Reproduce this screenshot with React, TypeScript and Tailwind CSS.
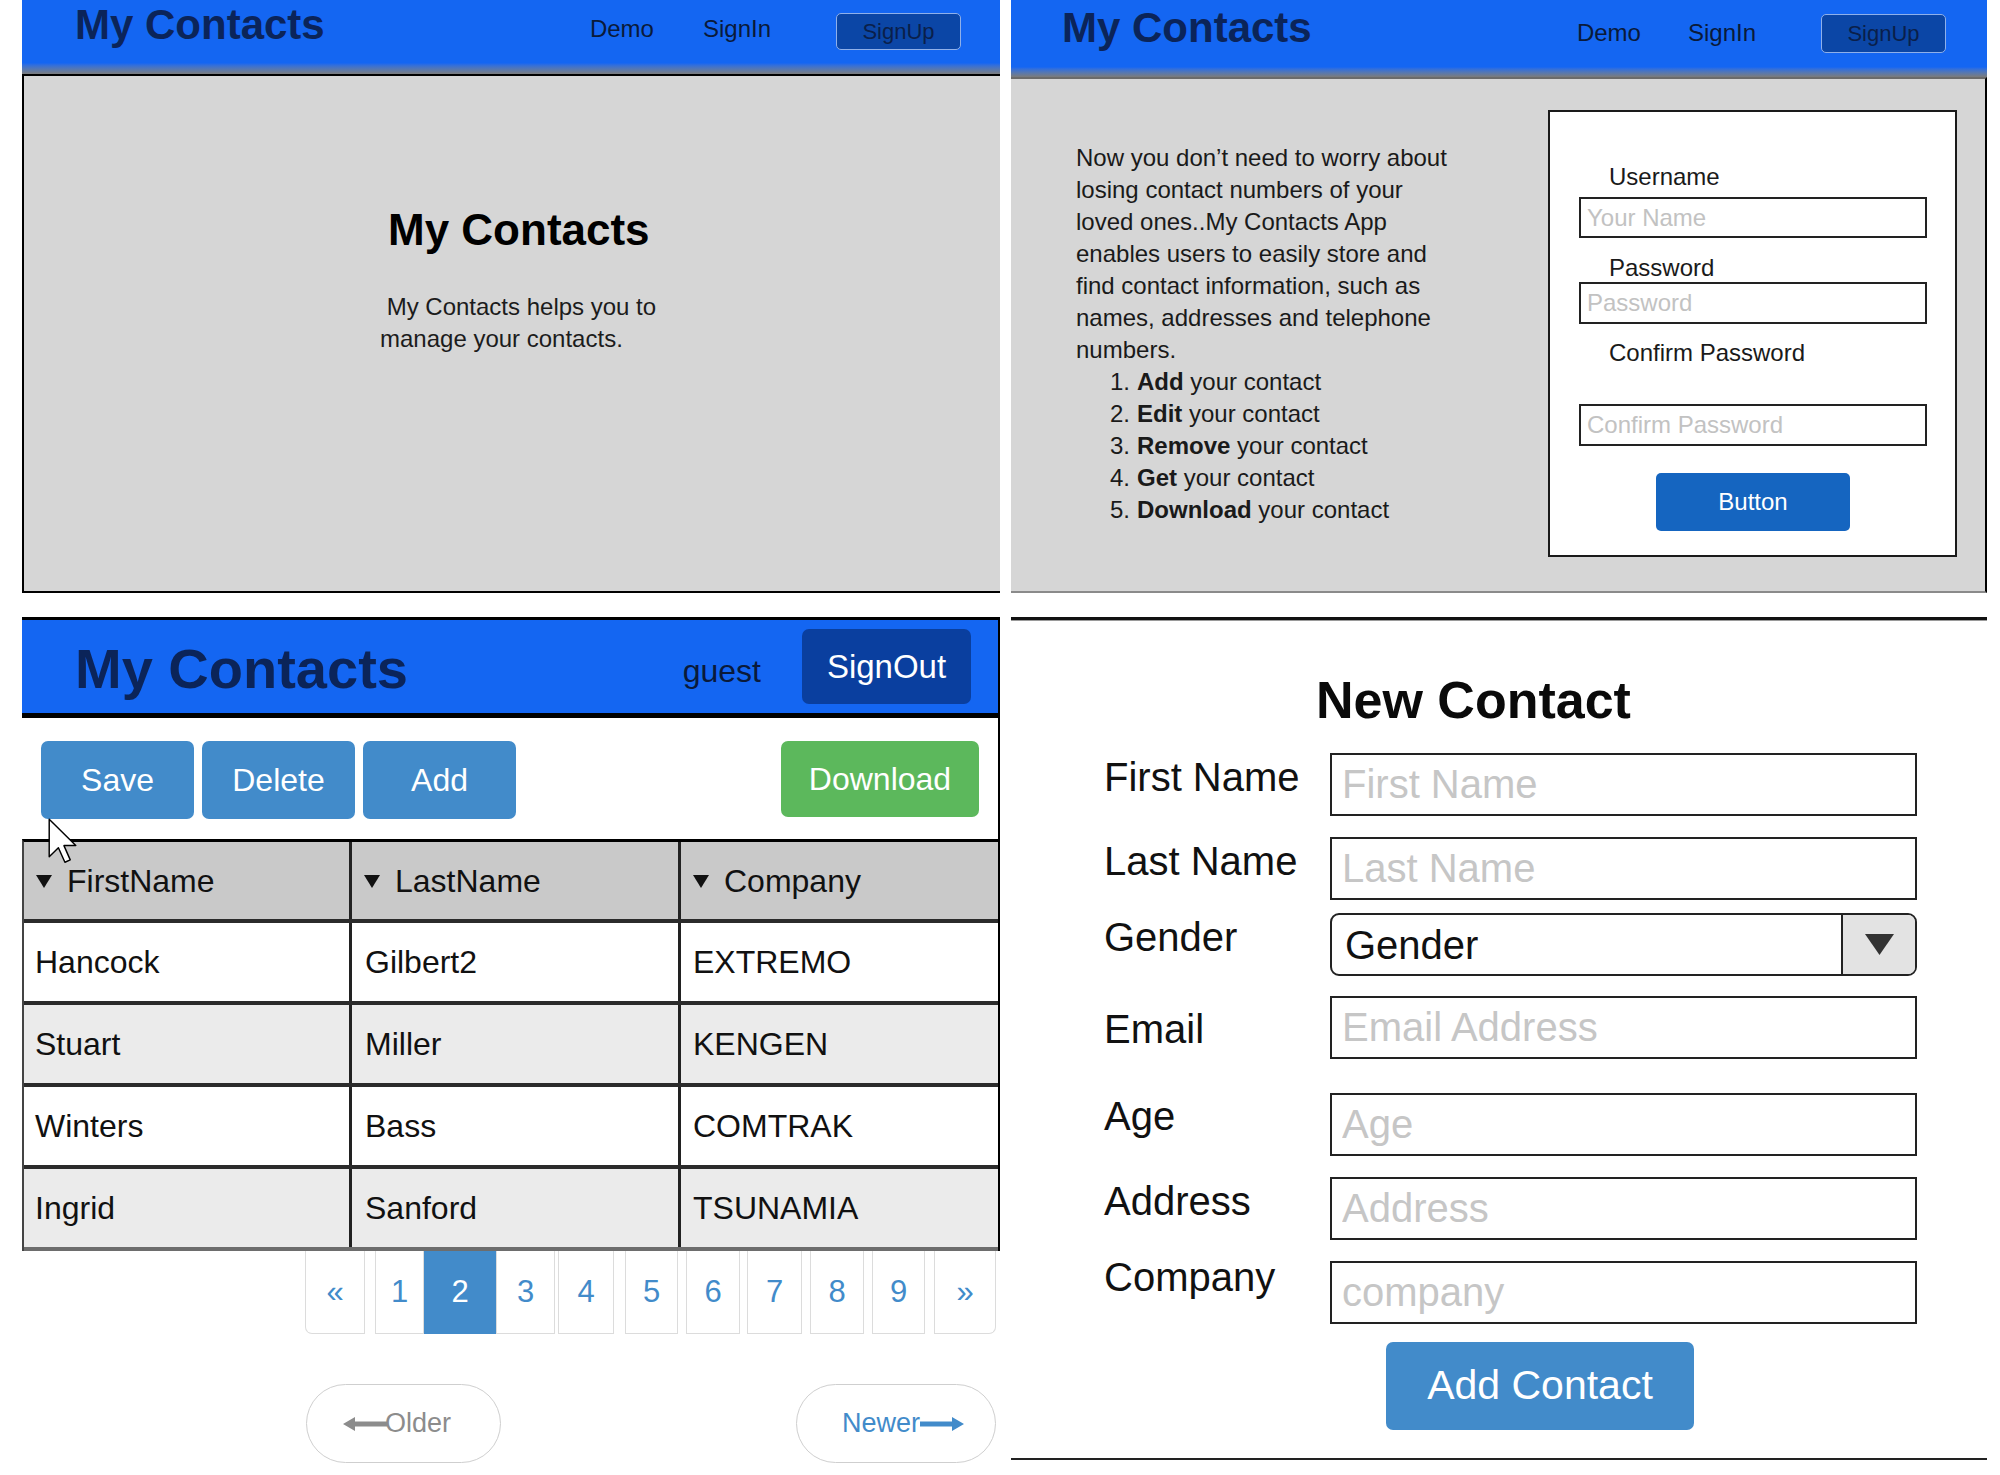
import React from "react";

const contacts = [
  { first: "Hancock", last: "Gilbert2", company: "EXTREMO" },
  { first: "Stuart", last: "Miller", company: "KENGEN" },
  { first: "Winters", last: "Bass", company: "COMTRAK" },
  { first: "Ingrid", last: "Sanford", company: "TSUNAMIA" },
];

const pages = [
  { label: "«", w: 60, gap: 0 },
  { label: "1", w: 49, gap: 10 },
  { label: "2", w: 72, gap: 0, active: true },
  { label: "3", w: 59, gap: 0 },
  { label: "4", w: 56, gap: 3 },
  { label: "5", w: 53, gap: 11 },
  { label: "6", w: 54, gap: 8 },
  { label: "7", w: 55, gap: 7 },
  { label: "8", w: 54, gap: 8 },
  { label: "9", w: 53, gap: 8 },
  { label: "»", w: 62, gap: 9 },
];

const newContactRows = [
  { label: "First Name", placeholder: "First Name", gap: "mt-[27px]", labelShift: "mt-[1px]" },
  { label: "Last Name", placeholder: "Last Name", gap: "mt-[21px]", labelShift: "mt-[1px]" },
  { label: "Gender", select: true, gap: "mt-[13px]", labelShift: "mt-[1px]" },
  { label: "Email", placeholder: "Email Address", gap: "mt-[20px]", labelShift: "mt-[10px]" },
  { label: "Age", placeholder: "Age", gap: "mt-[34px]", labelShift: "mt-0" },
  { label: "Address", placeholder: "Address", gap: "mt-[21px]", labelShift: "mt-[1px]" },
  { label: "Company", placeholder: "company", gap: "mt-[21px]", labelShift: "-mt-[7px]" },
];

function SortCaret() {
  return (
    <svg width="16" height="14" viewBox="0 0 16 14" aria-hidden className="shrink-0">
      <path d="M0 1 H16 L8 14 Z" fill="#111" />
    </svg>
  );
}

function PageArrow({ dir, color }: { dir: "left" | "right"; color: string }) {
  const d =
    dir === "left"
      ? "M0 8 L12 1 L12 5.5 L44 5.5 L44 10.5 L12 10.5 L12 15 Z"
      : "M44 8 L32 1 L32 5.5 L0 5.5 L0 10.5 L32 10.5 L32 15 Z";
  return (
    <svg width="44" height="16" viewBox="0 0 44 16" aria-hidden>
      <path d={d} fill={color} />
    </svg>
  );
}

function Cursor() {
  return (
    <svg
      width="29"
      height="46"
      viewBox="0 0 12 19"
      aria-hidden
      className="absolute left-[26px] top-[201px]"
    >
      <path
        d="M0.5 0.5 L0.5 16 L4.3 12.3 L7 18.3 L9.2 17.3 L6.6 11.4 L11.5 11.4 Z"
        fill="white"
        stroke="black"
        strokeWidth="0.6"
        strokeLinejoin="round"
      />
    </svg>
  );
}

function LandingPanel() {
  return (
    <section className="flex h-[593px] flex-col">
      <header className="flex h-[63px] items-start bg-[#1466f2] pl-[53px] pr-[39px]">
        <h1 className="mt-[4px] text-[42px] font-bold leading-none text-[#0b2459]">My Contacts</h1>
        <span className="ml-auto mt-[17px] text-[24px] leading-none text-[#0a1a3a]">Demo</span>
        <span className="ml-[49px] mt-[17px] text-[24px] leading-none text-[#0a1a3a]">SignIn</span>
        <button className="ml-[65px] mt-[13px] h-[37px] w-[125px] rounded-[5px] border border-[#8fb0ea] bg-[#0b46a6] text-[22px] leading-none text-[#0a1f4a]">
          SignUp
        </button>
      </header>
      <div className="h-[11px] bg-linear-to-b from-[#1466f2] to-[#7b7b7b]" />
      <div className="flex flex-1 flex-col border-2 border-r-0 border-black bg-[#d6d6d6]">
        <h2 className="ml-[364px] mt-[132px] text-[44px] font-bold leading-none text-black">My Contacts</h2>
        <p className="ml-[356px] mt-[39px] text-[24px] leading-[32px] text-[#1c1c1c]">
          {"\u00a0My Contacts helps you to"}
          <br />
          manage your contacts.
        </p>
      </div>
    </section>
  );
}

function SignUpPanel() {
  const lines = [
    "Now you don’t need to worry about",
    "losing contact numbers of your",
    "loved ones..My Contacts App",
    "enables users to easily store and",
    "find contact information, such as",
    "names, addresses and telephone",
    "numbers.",
  ];
  const steps = ["Add", "Edit", "Remove", "Get", "Download"];
  return (
    <section className="flex h-[593px] flex-col">
      <header className="flex h-[67px] items-start bg-[#1466f2] pl-[51px] pr-[41px]">
        <h1 className="mt-[7px] text-[42px] font-bold leading-none text-[#0b2459]">My Contacts</h1>
        <span className="ml-auto mt-[21px] text-[24px] leading-none text-[#0a1a3a]">Demo</span>
        <span className="ml-[47px] mt-[21px] text-[24px] leading-none text-[#0a1a3a]">SignIn</span>
        <button className="ml-[65px] mt-[14px] h-[39px] w-[125px] rounded-[5px] border border-[#8fb0ea] bg-[#0b46a6] text-[22px] leading-none text-[#0a1f4a]">
          SignUp
        </button>
      </header>
      <div className="h-[10px] bg-linear-to-b from-[#1466f2] to-[#7b7b7b]" />
      <div className="flex flex-1 items-start border-t-2 border-r-2 border-b-2 border-t-[#6b6b6b] border-r-black border-b-[#8a8a8a] bg-[#d6d6d6]">
        <div className="ml-[65px] mt-[63px] w-[472px] text-[24px] leading-[32px] text-[#1a1a1a]">
          {lines.map((l) => (
            <div key={l} className="whitespace-nowrap">
              {l}
            </div>
          ))}
          <ol>
            {steps.map((s, i) => (
              <li key={s} className="flex whitespace-nowrap pl-[34px]">
                <span className="w-[27px]">{i + 1}.</span>
                <span>
                  <b>{s}</b> your contact
                </span>
              </li>
            ))}
          </ol>
        </div>
        <div className="mt-[31px] flex h-[447px] w-[409px] flex-col border-2 border-[#1a1a1a] bg-white text-[24px] text-[#1a1a1a]">
          <label className="ml-[59px] mt-[51px] leading-[28px]">Username</label>
          <input
            placeholder="Your Name"
            className="ml-[29px] mt-[6px] h-[41px] w-[348px] border-2 border-[#222] bg-white px-[6px] text-[24px] outline-none placeholder:text-[#c2c2c2]"
          />
          <label className="ml-[59px] mt-[16px] leading-[28px]">Password</label>
          <input
            placeholder="Password"
            className="ml-[29px] h-[42px] w-[348px] border-2 border-[#222] bg-white px-[6px] text-[24px] outline-none placeholder:text-[#c2c2c2]"
          />
          <label className="ml-[59px] mt-[15px] leading-[28px]">Confirm Password</label>
          <input
            placeholder="Confirm Password"
            className="ml-[29px] mt-[37px] h-[42px] w-[348px] border-2 border-[#222] bg-white px-[6px] text-[24px] outline-none placeholder:text-[#c2c2c2]"
          />
          <button className="ml-[106px] mt-[27px] h-[58px] w-[194px] rounded-[5px] bg-[#1565c0] text-[24px] text-white">
            Button
          </button>
        </div>
      </div>
    </section>
  );
}

function ContactListPanel() {
  return (
    <section className="relative flex flex-col">
      <header className="flex h-[101px] items-start border-t-[3px] border-r-2 border-b-[5px] border-black bg-[#1466f2] pl-[53px] pr-[27px]">
        <h1 className="mt-[21px] text-[56px] font-bold leading-none text-[#0b2459]">My Contacts</h1>
        <span className="ml-auto mt-[35px] text-[32px] leading-none text-[#0a1a3a]">guest</span>
        <button className="ml-[41px] mt-[9px] h-[75px] w-[169px] rounded-[7px] bg-[#0a3f9f] text-[33px] text-white">
          SignOut
        </button>
      </header>

      <div className="flex h-[121px] items-start border-r-2 border-black bg-white px-[19px] pt-[23px]">
        {["Save", "Delete", "Add"].map((b, i) => (
          <button
            key={b}
            className={`h-[78px] w-[153px] rounded-[7px] bg-[#428bca] text-[32px] text-white ${i > 0 ? "ml-[8px]" : ""}`}
          >
            {b}
          </button>
        ))}
        <button className="ml-auto h-[76px] w-[198px] rounded-[7px] bg-[#5cb85c] text-[32px] text-white">
          Download
        </button>
      </div>

      <div className="border-t-[3px] border-r-2 border-l-2 border-black border-l-[#444] text-[32px] text-[#111]">
        <div className="grid h-[81px] grid-cols-[328px_329px_1fr] border-b-4 border-[#2b2b2b] bg-[#c9c9c9]">
          {["FirstName", "LastName", "Company"].map((h, i) => (
            <div
              key={h}
              className={`flex items-center gap-[15px] pl-[12px] ${i < 2 ? "border-r-[3px] border-[#222]" : ""}`}
            >
              <SortCaret />
              <span>{h}</span>
            </div>
          ))}
        </div>
        {contacts.map((c, r) => (
          <div
            key={c.first}
            className={`grid h-[82px] grid-cols-[328px_329px_1fr] border-b-4 ${r === contacts.length - 1 ? "border-[#6d6d6d]" : "border-[#2b2b2b]"} ${r % 2 ? "bg-[#ebebeb]" : "bg-white"}`}
          >
            <div className="flex items-center border-r-[3px] border-[#222] pl-[11px]">{c.first}</div>
            <div className="flex items-center border-r-[3px] border-[#222] pl-[13px]">{c.last}</div>
            <div className="flex items-center pl-[12px]">{c.company}</div>
          </div>
        ))}
      </div>

      <nav className="ml-[283px] flex h-[83px] items-stretch text-[31px] text-[#428bca]">
        {pages.map((p) => (
          <span
            key={p.label}
            style={{ width: p.w, marginLeft: p.gap }}
            className={`flex items-center justify-center border border-t-0 ${p.label === "«" ? "rounded-bl-[7px]" : ""} ${p.label === "»" ? "rounded-br-[7px]" : ""} ${p.active ? "border-[#428bca] bg-[#428bca] text-white" : "border-[#dcdcdc] bg-white"}`}
          >
            {p.label}
          </span>
        ))}
      </nav>

      <div className="mt-[50px] flex pl-[284px] pr-[4px] text-[27px]">
        <button className="flex h-[79px] w-[195px] items-center justify-center rounded-full border border-[#cfcfcf] pr-[13px] text-[#8c8c8c]">
          <PageArrow dir="left" color="#8c8c8c" />
          <span className="-ml-[2px]">Older</span>
        </button>
        <button className="ml-auto flex h-[79px] w-[200px] items-center justify-center rounded-full border border-[#cfcfcf] pl-[14px] text-[#428bca]">
          <span>Newer</span>
          <PageArrow dir="right" color="#428bca" />
        </button>
      </div>

      <Cursor />
    </section>
  );
}

function NewContactPanel() {
  return (
    <section className="flex flex-col">
      <div className="h-[3px] bg-[#111]" />
      <div className="h-[1px] bg-[#9a9a9a]" />
      <h2 className="ml-[305px] mt-[53px] text-[52px] font-bold leading-none text-[#0a0a0a]">New Contact</h2>
      <div className="flex flex-col pl-[93px]">
        {newContactRows.map((row) => (
          <div key={row.label} className={`flex items-start ${row.gap}`}>
            <span className={`w-[226px] text-[40px] leading-[46px] text-[#111] ${row.labelShift}`}>
              {row.label}
            </span>
            {row.select ? (
              <div className="flex h-[63px] w-[587px] overflow-hidden rounded-[9px] border-2 border-[#222] bg-white">
                <span className="flex flex-1 items-center pl-[13px] text-[40px] text-[#111]">Gender</span>
                <span className="flex w-[74px] items-center justify-center border-l-2 border-[#222] bg-[#e3e3e3]">
                  <svg width="29" height="21" viewBox="0 0 29 21" aria-hidden>
                    <path d="M0 0 H29 L14.5 21 Z" fill="#333" />
                  </svg>
                </span>
              </div>
            ) : (
              <input
                placeholder={row.placeholder}
                className="h-[63px] w-[587px] border-2 border-[#222] bg-white px-[10px] text-[40px] outline-none placeholder:text-[#c6c6c6]"
              />
            )}
          </div>
        ))}
      </div>
      <button className="ml-[375px] mt-[18px] h-[88px] w-[308px] rounded-[7px] bg-[#428bca] text-[41px] text-white">
        Add Contact
      </button>
      <div className="mt-[28px] h-[2px] bg-[#222]" />
    </section>
  );
}

export default function App() {
  return (
    <div className="h-[1475px] w-[2000px] bg-white font-['Liberation_Sans',Arial,sans-serif]">
      <div className="grid grid-cols-[978px_976px] gap-x-[11px] gap-y-[24px] pl-[22px]">
        <LandingPanel />
        <SignUpPanel />
        <ContactListPanel />
        <NewContactPanel />
      </div>
    </div>
  );
}
